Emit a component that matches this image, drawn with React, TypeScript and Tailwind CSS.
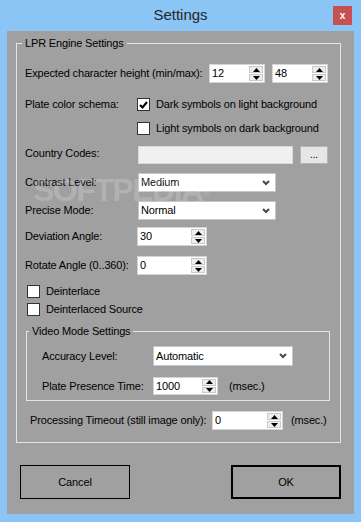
import React from "react";

function Spinner({ value, className }: { value: string; className: string }) {
  return (
    <div className={`flex h-full border border-[#d4d4d4] bg-white ${className}`}>
      <div className="flex flex-1 items-center pl-[2px] leading-none">{value}</div>
      <div className="my-[1px] mr-[1px] flex w-[14px] flex-col gap-[1px]">
        <div className="flex flex-1 items-center justify-center border border-[#c9c9c9] bg-[#ededed]">
          <svg width="7" height="4" viewBox="0 0 7 4">
            <path d="M0 4L3.5 0L7 4z" fill="#000" />
          </svg>
        </div>
        <div className="flex flex-1 items-center justify-center border border-[#c9c9c9] bg-[#ededed]">
          <svg width="7" height="4" viewBox="0 0 7 4">
            <path d="M0 0L3.5 4L7 0z" fill="#000" />
          </svg>
        </div>
      </div>
    </div>
  );
}

function Dropdown({ value, className }: { value: string; className: string }) {
  return (
    <div className={`flex h-full items-center justify-between border border-[#c6c6c6] bg-white pl-[2px] pr-[5px] ${className}`}>
      <span>{value}</span>
      <svg width="8" height="6" viewBox="0 0 8 6">
        <path d="M1 1l3 3 3-3" fill="none" stroke="#4a4a4a" strokeWidth="2" />
      </svg>
    </div>
  );
}

function Checkbox({ checked, label }: { checked?: boolean; label: string }) {
  return (
    <div className="flex h-[13px] items-center">
      <div className="flex h-[13px] w-[13px] items-center justify-center border border-[#333] bg-white">
        {checked && (
          <svg width="9" height="8" viewBox="0 0 9 8">
            <path d="M1 4l2.5 2.5L8 1" fill="none" stroke="#000" strokeWidth="2" />
          </svg>
        )}
      </div>
      <span className="ml-[6px] whitespace-nowrap">{label}</span>
    </div>
  );
}

export default function App() {
  return (
    <div className="relative flex h-[522px] w-[361px] flex-col bg-[#8bc5f6] font-['Liberation_Sans',Arial,sans-serif] text-[11px] tracking-[-0.15px] text-black">
      {/* Title bar */}
      <div className="grid h-[31px] grid-cols-[1fr_auto_1fr] items-center">
        <div />
        <div className="text-[15px] tracking-normal text-[#262626]">Settings</div>
        <div className="mr-[9px] flex h-[19px] w-[19px] items-center justify-center justify-self-end bg-[#c75050] text-[10px] font-bold text-white">
          x
        </div>
      </div>

      {/* Client area */}
      <div className="mx-[7px] flex h-[483px] flex-col bg-[#a0a0a0]">
        <fieldset className="ml-[9px] mt-[6px] w-[325px] border border-[#e4e4e4] px-[8px] pb-[12px]">
          <legend className="-ml-[3px] px-[3px] leading-[13px]">LPR Engine Settings</legend>

          <div className="mt-[14px] flex h-[19px] items-center">
            <span className="w-[184px] whitespace-nowrap">Expected character height (min/max):</span>
            <Spinner value="12" className="w-[56px]" />
            <Spinner value="48" className="ml-[7px] w-[56px]" />
          </div>

          <div className="mt-[15px] flex items-start">
            <span className="w-[112px] leading-[13px]">Plate color schema:</span>
            <div className="flex flex-col gap-[11px]">
              <Checkbox checked label="Dark symbols on light background" />
              <Checkbox label="Light symbols on dark background" />
            </div>
          </div>

          <div className="mt-[11px] flex h-[18px] items-center">
            <span className="-mt-[4px] w-[113px]">Country Codes:</span>
            <div className="h-full w-[155px] border border-[#dadada] bg-[#f0f0f0]" />
            <div className="ml-[7px] flex h-full w-[28px] items-center justify-center border border-[#b5b5b5] bg-[#e6e6e6] text-[10px] leading-none">
              ...
            </div>
          </div>

          <div className="mt-[9px] flex h-[19px] items-center">
            <span className="w-[113px]">Contrast Level:</span>
            <Dropdown value="Medium" className="w-[138px]" />
          </div>

          <div className="mt-[9px] flex h-[19px] items-center">
            <span className="w-[113px]">Precise Mode:</span>
            <Dropdown value="Normal" className="w-[138px]" />
          </div>

          <div className="mt-[7px] flex h-[19px] items-center">
            <span className="w-[112px]">Deviation Angle:</span>
            <Spinner value="30" className="w-[70px]" />
          </div>

          <div className="mt-[10px] flex h-[19px] items-center">
            <span className="w-[112px]">Rotate Angle (0..360):</span>
            <Spinner value="0" className="w-[70px]" />
          </div>

          <div className="ml-[2px] mt-[10px]">
            <Checkbox label="Deinterlace" />
          </div>
          <div className="ml-[2px] mt-[5px]">
            <Checkbox label="Deinterlaced Source" />
          </div>

          <fieldset className="ml-[1px] mt-[9px] w-[304px] border border-[#e4e4e4] pl-[5px] pb-[5px]">
            <legend className="-ml-[3px] px-[3px] leading-[13px]">Video Mode Settings</legend>

            <div className="ml-[10px] mt-[8px] flex h-[20px] items-center">
              <span className="w-[111px]">Accuracy Level:</span>
              <Dropdown value="Automatic" className="w-[140px]" />
            </div>

            <div className="ml-[10px] mt-[11px] flex h-[18px] items-center">
              <span className="w-[111px]">Plate Presence Time:</span>
              <Spinner value="1000" className="w-[65px]" />
              <span className="ml-[11px]">(msec.)</span>
            </div>
          </fieldset>

          <div className="ml-[5px] mt-[10px] flex h-[19px] items-center">
            <span className="w-[182px] whitespace-nowrap">Processing Timeout (still image only):</span>
            <Spinner value="0" className="w-[71px]" />
            <span className="ml-[8px]">(msec.)</span>
          </div>
        </fieldset>

        <div className="mt-[22px] flex justify-between px-[13px]">
          <div className="flex h-[34px] w-[110px] items-center justify-center border border-black">Cancel</div>
          <div className="flex h-[34px] w-[110px] items-center justify-center border-2 border-black">OK</div>
        </div>
      </div>
      <div className="h-[8px]" />

      {/* Watermark overlay */}
      <div className="pointer-events-none absolute left-[33px] top-[166px] text-[32px] font-bold tracking-[-1.5px] text-white/20">
        SOFTPEDIA<sup className="text-[9px]">®</sup>
      </div>
    </div>
  );
}
